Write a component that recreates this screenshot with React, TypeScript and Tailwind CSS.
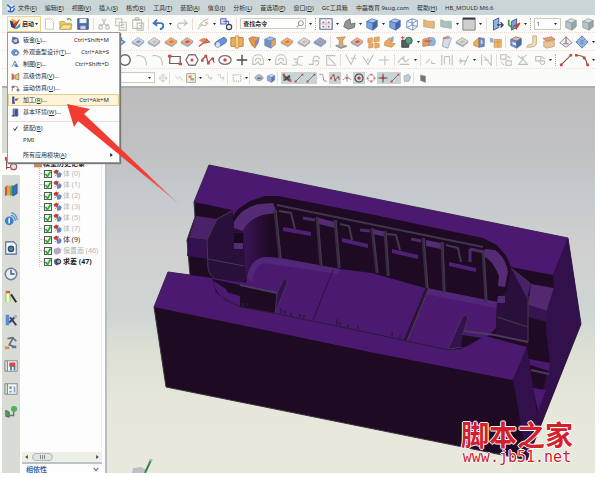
import { useState } from 'react'
import type { ReactNode } from 'react'
import clsx from 'clsx'

interface MenuItem {
  label: string
  shortcut?: string
  icon?: string
  checked?: boolean
  active?: boolean
  submenu?: boolean
}

interface TreeNode {
  label: string
  icon: string
  tone: string
}

const menus = [
  '文件(F)', '编辑(E)', '视图(V)', '插入(S)', '格式(R)', '工具(T)', '装配(A)', '信息(I)', '分析(L)',
  '首选项(P)', '窗口(O)', 'GC工具箱', '中磊教育 9sug.com', '帮助(H)', 'HB_MOULD M6.6',
]

const startMenu: MenuItem[][] = [
  [
    { label: '钣金(L)...', shortcut: 'Ctrl+Shift+M', icon: 'sheet' },
    { label: '外观造型设计(T)...', shortcut: 'Ctrl+Alt+S', icon: 'shape' },
    { label: '制图(F)...', shortcut: 'Ctrl+Shift+D', icon: 'drafting' },
    { label: '高级仿真(V)...', icon: 'simulation' },
    { label: '运动仿真(U)...', icon: 'motion' },
    { label: '加工(R)...', shortcut: 'Ctrl+Alt+M', icon: 'machining', active: true },
    { label: '基本环境(W)...', icon: 'gateway' },
  ],
  [
    { label: '装配(B)', checked: true },
    { label: 'PMI' },
  ],
  [{ label: '所有应用模块(A)', submenu: true }],
]

// '.' is a drop-down caret, '|' a divider, '#' a drag grip
const standardLeft = 'new open save | cut copy paste | undo . redo | wrench . props |'.split(' ')
const standardRight = 'table . shell . cube . cube wire patch patchGrey . window . | door csys . #'.split(' ')
const featureBar =
  'point slab slabGrey slabOrange slabRed sketch pipe block cone cubeOrange slabOrange slabGrey slabBlue | tee slabRed pattern corner unite . trim draft slabGrey thicken extract | shellBlue bend offset pyramid sphere .'.split(' ')
const sketchBar =
  'circle arc arc rect hexagon spline ellipse plus loop . loop offsetCurve hook corner2 | trimLine extend cross | mirror . | pointGrey fit axis . parallel | project group gearGrey . # line arcRed .'.split(' ')
const selectionBar = 'gear | snap boxSel . vertex vertex | marquee . | eye cubeSm |'.split(' ')
const snapBar = ['any', '+', 'line', '+', 'line', '+', 'curve', '', 'spline', '+', 'midpoint', '', 'target', '+', 'quadrant', '', 'plusRed', '+', 'line', '+', 'face', '']

const treeNodes: TreeNode[] = [
  ...[0, 1, 2, 3, 5, 7].map((n) => ({ label: `体 (${n})`, icon: 'body', tone: 'text-[#b5b5b5]' })),
  { label: '体 (9)', icon: 'body', tone: 'text-[#333]' },
  { label: '偏置面 (46)', icon: 'offsetFace', tone: 'text-[#b5b5b5]' },
  { label: '求差 (47)', icon: 'subtract', tone: 'font-bold text-[#222]' },
]

const resources = ['library', 'web', 'document', 'history', 'roles', 'tools', 'robot', 'wizard', 'template', 'flow']

const slab = (fill: string, accent: string, edge = '#8f9aa5') => (
  <>
    <path d="M1 8 8 3l7 4-6 5z" fill={fill} stroke={edge} strokeWidth=".8" />
    <path d="M1 8v2l8 4v-2zM9 12v2l6-5V7z" fill={edge} opacity=".7" />
    <path d="M5 8l4-2 3 1.500-4 2z" fill={accent} />
  </>
)

const box = (top: string, front: string, side: string, edge: string) => (
  <g stroke={edge} strokeWidth=".8" strokeLinejoin="round">
    <path d="M2 5l6-3 6 2-5 3z" fill={top} />
    <path d="M2 5v7l7 3V7z" fill={front} />
    <path d="M14 4v7l-5 4V7z" fill={side} />
  </g>
)

const grey = (d: string) => <path d={d} fill="none" stroke="#bfc0b3" strokeWidth="1.200" />

const glyphs: Record<string, ReactNode> = {
  new: <path d="M4 2h6l3 3v9H4z" fill="#fdfdfb" stroke="#c3c8b4" />,
  open: (
    <>
      <path d="M1 5h5l1 2h7v7H1z" fill="#e9c765" stroke="#b5964a" strokeWidth=".8" />
      <path d="M4 9h11l-3 5H1z" fill="#ffe596" stroke="#b5964a" strokeWidth=".8" />
      <path d="M9 3c3-2 4-1 5 1" fill="none" stroke="#5a9a45" strokeWidth="1.500" />
    </>
  ),
  save: (
    <>
      <path d="M2 2h12v12H2z" fill="#4e69a8" stroke="#3b4d7a" />
      <path d="M4 2h8v5H4z" fill="#eef2fa" />
      <path d="M5 10h6v4H5z" fill="#c7cfdf" />
    </>
  ),
  cut: grey('M6 2l4 8M10 2L6 10M2 9h5M10 9h4M4 10a2 2 0 1 0 .1 0M12 10a2 2 0 1 0 .1 0'),
  copy: grey('M2 2h7v8H2zM6 6h8v9H6zM8 9h4M8 12h4'),
  paste: grey('M2 3h10v10H2zM5 1h4v3H5zM7 7h7v8H7zM9 10h4'),
  undo: <path d="M6 3L2 7l4 3M2.500 7H10c4 0 4 6-1 7" fill="none" stroke="#4574bd" strokeWidth="2.200" />,
  redo: grey('M10 3l4 4-4 3M13.500 7H6c-4 0-4 6 1 7'),
  wrench: grey('M2 14l5-6M6 9l5 1 2-5M8 5l6-3M3 10l6-6M10 6l4 2'),
  props: (
    <>
      <path d="M2 2h6v6H2zM5 5h6v6" fill="#dfe7f7" stroke="#5868b8" strokeWidth="1.200" />
      <circle cx="11.500" cy="11.500" r="3" fill="#f2f2d8" stroke="#333b6d" strokeWidth="1.300" />
    </>
  ),
  table: (
    <>
      <path d="M1 2h14v12H1z" fill="#fff" stroke="#53699b" strokeWidth="1.300" />
      <path d="M4 5h2v2H4zM10 5h2v2h-2zM4 10h2v2H4zM10 10h2v2h-2z" fill="#d65348" />
      <path d="M8 2v12M1 8h14" stroke="#a9b9d8" />
    </>
  ),
  shell: <path d="M4 5l5-3 1 6 5-1-1 5-7 2-5-3z" fill="#8f9494" stroke="#686c6c" />,
  cube: box('#a9c8f3', '#7aa4e3', '#4467a9', '#4a68a4'),
  cubeGrey: box('#d6dddd', '#b8c3c5', '#98a4a6', '#8b9798'),
  cubeOrange: box('#9dbbe8', '#6e92d0', '#e8a35c', '#6b82ad'),
  wire: <path d="M2 5l6-3 6 2v7l-5 4-7-3zM2 5l7 2 5-3M9 7v8M8 2v7l-6 3M8 9l6 2" fill="none" stroke="#6d96bd" strokeWidth="1.100" />,
  patch: <path d="M2 3l5 2h7v8l-6-1-6-1z" fill="#e9b777" stroke="#c9a27a" />,
  patchGrey: <path d="M2 3l5 2h7v8l-6-1-6-1z" fill="#a9bfc6" stroke="#9bb39a" />,
  window: (
    <>
      <path d="M1 1h14v14H1z" fill="#cfd1cf" stroke="#777" />
      <path d="M1 1h14v2H1z" fill="#37304f" />
    </>
  ),
  door: (
    <>
      <path d="M4 4l6-3v11l-6 3z" fill="#8eb4e4" stroke="#3c5383" />
      <path d="M8 9h7M12 6l3 3-3 3" fill="none" stroke="#323d63" strokeWidth="1.400" />
    </>
  ),
  csys: (
    <>
      <path d="M5 5l6-3v10l-6 3z" fill="#789fd6" stroke="#3f568a" />
      <path d="M2 3v6l5 4" fill="none" stroke="#3d9b46" strokeWidth="2" />
      <path d="M7 11l8-4M10 14l4-6" stroke="#c63d36" strokeWidth="1.700" />
    </>
  ),
  point: <path d="M3 2l9 6-7 5M9 3l-4 9" fill="none" stroke="#4e91b6" strokeWidth="1.800" />,
  slab: slab('#cfdcec', '#7695c8'),
  slabGrey: slab('#d3dde3', '#ecb184'),
  slabOrange: slab('#f0b072', '#d97a36', '#b18c77'),
  slabRed: slab('#edb18c', '#cf4f3c', '#8994a5'),
  slabBlue: slab('#8dacdd', '#e58b62', '#6983b3'),
  sketch: (
    <>
      <path d="M2 6l6-3 5 3-5 4z" fill="#e58a65" />
      <path d="M2 13l10-7M10 4l4 4-5 1" fill="none" stroke="#bf6248" strokeWidth="1.500" />
    </>
  ),
  pipe: (
    <>
      <path d="M2 8l8-5c4-1 6 4 3 6l-8 5C1 14 0 10 2 8z" fill="#6e92d6" stroke="#4d6ba7" />
      <ellipse cx="4.500" cy="11" rx="2.500" ry="3" fill="#d3e0f4" />
    </>
  ),
  block: (
    <>
      <path d="M1 3h14v10H1z" fill="#eeb159" stroke="#aa7a40" />
      <path d="M6 1h4v14H6z" fill="#f6cd87" stroke="#bb8743" strokeWidth=".8" />
    </>
  ),
  cone: (
    <>
      <path d="M2 4l4-2 8 1-1 5-4 7-4-4z" fill="#e8944a" stroke="#af764c" strokeWidth=".8" />
      <path d="M9 7l5-3-1 5-4 5z" fill="#728fc4" />
    </>
  ),
  tee: (
    <>
      <path d="M3 3l10-1-3 4v5l5 2-7 2-6-3 4-1V6z" fill="#e6a866" stroke="#a98465" strokeWidth=".8" />
      <path d="M2 12l6 3 6-3" fill="none" stroke="#6b9bc4" strokeWidth="1.500" />
    </>
  ),
  pattern: <path d="M1 4l5-1v5l-5 1zM8 3l6-1v5l-6 1zM2 10l5-1v5l-5 1zM9 9l5 1v4l-5 1z" fill="#f0a95f" stroke="#c58a4c" strokeWidth=".7" />,
  corner: (
    <>
      <path d="M2 8l6-5 1 6 5 1-4 4-8-2z" fill="#eeaa58" stroke="#b9824c" strokeWidth=".8" />
      <path d="M9 3l3-2v6l-3 2z" fill="#88a6d6" />
    </>
  ),
  unite: (
    <>
      <path d="M2 6h8v8H2z" fill="#55605e" stroke="#333d3a" />
      <circle cx="10" cy="6.500" r="4" fill="#5f9a7e" stroke="#2f5c4e" />
      <path d="M3 1v4M1 3h4" stroke="#d55" strokeWidth="1.200" />
    </>
  ),
  trim: (
    <>
      <path d="M1 5l7-2v9l-7 1z" fill="#e89b5a" stroke="#b27f59" strokeWidth=".8" />
      <path d="M8 3h5c3 2 3 8 0 9H8z" fill="#92b3e2" stroke="#728fbd" strokeWidth=".8" />
      <path d="M3 7h8" stroke="#cf4c3f" strokeWidth="1.500" />
    </>
  ),
  draft: (
    <>
      <path d="M5 3l6-2 3 3-4 11-6-2z" fill="#d2dde9" stroke="#8d95a5" strokeWidth=".8" />
      <path d="M5 4l7-1" stroke="#d46a5e" strokeWidth="1.500" />
    </>
  ),
  thicken: (
    <>
      <path d="M2 8l6-5v11l-6-2z" fill="#f0b14c" stroke="#b28949" strokeWidth=".8" />
      <path d="M8 3l6 1v9l-6 1z" fill="#6c8fcb" stroke="#4c6ca9" strokeWidth=".8" />
      <path d="M10 6h2v4h-2z" fill="#f3d18d" />
    </>
  ),
  extract: (
    <>
      <path d="M1 3l4 1v5l-4-1z" fill="#8eb3d8" />
      <path d="M6 5h8v9H6z" fill="#efb66c" stroke="#c28f55" strokeWidth=".8" />
      <path d="M6 8h8M10 5v9" stroke="#d2925b" />
    </>
  ),
  shellBlue: (
    <>
      {box('#f1b98e', '#7394d1', '#4c68a2', '#596a97')}
      <path d="M4 8l4 1.500V12l-4-1.500z" fill="#e8eefa" />
    </>
  ),
  bend: <path d="M9 1h4v8c0 4-4 5-11 5l2-3c4 0 5-1 5-4z" fill="#e4dfc9" stroke="#d1a36f" />,
  offset: (
    <>
      <path d="M1 4l10-2 4 3-10 2z" fill="#ec9a74" stroke="#b6785a" strokeWidth=".8" />
      <path d="M2 7l3 1 9-2v7l-9 2-3-2z" fill="#e7c596" stroke="#b49a77" strokeWidth=".8" />
    </>
  ),
  pyramid: (
    <>
      <path d="M8 2l7 7-7 5-7-5z" fill="#e8eef4" stroke="#75839d" />
      <path d="M8 2v7M5 10h6" stroke="#c45d5d" strokeWidth="1.400" />
    </>
  ),
  sphere: (
    <>
      <path d="M8 1l7 7-7 7-7-7z" fill="#a9c5ee" stroke="#5b7cb2" />
      <path d="M1 8h14M8 1v14M4 5q4 3 8 0M4 11q4-3 8 0" fill="none" stroke="#5b7cb2" strokeWidth=".8" />
    </>
  ),
  circle: <circle cx="8" cy="8" r="6" fill="none" stroke="#666" strokeWidth="1.600" />,
  arc: grey('M2 3c7-1 11 3 11 11'),
  rect: (
    <>
      <path d="M2 4h12v8H2z" fill="none" stroke="#6c5f5f" strokeWidth="1.400" />
      <path d="M0 2h4v3H0zM12 11h4v3h-4z" fill="#cb4c43" />
    </>
  ),
  hexagon: (
    <>
      <path d="M4.500 2h7L15 8l-3.500 6h-7L1 8z" fill="none" stroke="#777" strokeWidth="1.500" />
      <circle cx="8" cy="8" r="1.800" fill="#d44" />
    </>
  ),
  spline: (
    <>
      <path d="M1 8l5-5 2 8 5-5 2 5" fill="none" stroke="#755" strokeWidth="1.400" />
      <path d="M4 2h3v3H4zM7 10h3v3H7zM12 5h3v3h-3zM0 7h3v3H0z" fill="#cf4b44" />
    </>
  ),
  ellipse: (
    <>
      <ellipse cx="8" cy="8" rx="7" ry="5" fill="none" stroke="#777" strokeWidth="1.500" />
      <circle cx="8" cy="8" r="2" fill="#d44" />
    </>
  ),
  plus: <path d="M8 2v12M2 8h12" stroke="#4c4c4c" strokeWidth="1.600" />,
  loop: grey('M2 13V8c0-8 12-8 12 0v5h-4l-2-3-3 3zM5 9c0-4 6-4 6 0'),
  offsetCurve: grey('M2 14h5c2 0 0-8 4-10h4M6 10l5 4h3M4 7h4'),
  hook: grey('M2 13h5V8c0-6 7-5 7-1M8 9h5c1 3 0 5-3 5'),
  corner2: grey('M3 2v12h11M3 3h10M5 5l8 8'),
  trimLine: grey('M2 2l6 11 5-11M8 6h6'),
  extend: grey('M2 4l6 9 6-11M8 6v3'),
  cross: grey('M2 8h12M9 3v11'),
  mirror: grey('M1 11l5-6 3 5 5-3M3 13h11M8 3v4'),
  pointGrey: grey('M3 12l5-5M10 9v3h4'),
  fit: grey('M2 2v12M14 2v12M5 4h6M5 4v9M11 4v9'),
  axis: grey('M2 9h9M8 14l5-11M3 6l3 3-3 3'),
  parallel: grey('M3 2v12M14 2v12L6 4M6 8h5'),
  project: grey('M2 2h6v5H2zM8 9h6v5H8zM2 10l4 4M9 3l4 3'),
  group: grey('M2 3l5 4 5-5M3 13h10l-5-6zM7 3v4'),
  gearGrey: grey('M3 4h6v5H3zM8 9h5c2 4-5 7-5 0M10 4l3 3'),
  line: (
    <>
      <path d="M3 13L13 3" stroke="#765" strokeWidth="1.400" />
      <path d="M1 12h3v3H1zM12 1h3v3h-3z" fill="#c9463f" />
    </>
  ),
  arcRed: (
    <>
      <path d="M2 3c7-1 11 3 12 11" fill="none" stroke="#765" strokeWidth="1.300" />
      <path d="M0 1h3v3H0zM9 4h3v3H9zM13 12h3v3h-3z" fill="#c9463f" />
    </>
  ),
  gear: grey('M8 3a5 5 0 1 0 .1 0M8 6a2 2 0 1 0 .1 0M8 1v3M8 12v3M1 8h3M12 8h3'),
  snap: grey('M2 5l4 4 3-3 5 6'),
  boxSel: (
    <>
      <path d="M1 1h14v14H1z" fill="#f6f1dd" stroke="#857c6c" />
      <path d="M4 4h5v4H4z" fill="#d88" />
      <path d="M7 8h6v4H7z" fill="#99b17f" />
    </>
  ),
  vertex: grey('M2 3h5v5h6M10 6l3 2-3 4'),
  marquee: <path d="M2 3h12v10H2z" fill="none" stroke="#8f8f86" strokeWidth="1.200" strokeDasharray="2 1.500" />,
  eye: (
    <>
      <path d="M1 8c4-7 10-7 14 0-4 6-10 6-14 0z" fill="#b9c2ca" stroke="#7b8791" />
      <path d="M5 7h7v3H5z" fill="#5b7a9d" />
    </>
  ),
  cubeSm: box('#c7daf4', '#88ace2', '#5877af', '#7688a8'),
  any: (
    <>
      <path d="M2 3l4 3 5-3 3 5-3 5-5-2-4 2z" fill="#6f8c6e" />
      <path d="M3 4l10 9M13 4L4 12" stroke="#3b3b3b" strokeWidth="1.800" />
      <path d="M1 1h4v4H1zM11 10h4v4h-4z" fill="#c94c42" />
    </>
  ),
  curve: <path d="M2 2h4c4 0 1 11 5 11h3" fill="none" stroke="#8a8383" strokeWidth="1.400" />,
  midpoint: (
    <>
      <path d="M8 2v12M2 11c2-5 10-5 12 0" fill="none" stroke="#777" strokeWidth="1.300" />
      <circle cx="8" cy="8" r="1.500" fill="#c55" />
    </>
  ),
  target: (
    <>
      <circle cx="8" cy="8" r="6.500" fill="none" stroke="#414141" strokeWidth="1.700" />
      <circle cx="8" cy="8" r="2.500" fill="#b9332c" />
    </>
  ),
  quadrant: (
    <>
      <circle cx="8" cy="8" r="5.500" fill="none" stroke="#b9a49a" strokeWidth="1.300" />
      <path d="M7 1h3v3H7zM7 12h3v3H7zM1 7h3v3H1zM12 7h3v3h-3z" fill="#d76d62" />
    </>
  ),
  plusRed: (
    <>
      <path d="M8 1v14M1 8h14" stroke="#4a4444" strokeWidth="1.600" />
      <path d="M6 6h4v4H6z" fill="#bf3c35" />
    </>
  ),
  face: <path d="M3 5l7-3 4 4-3 7-7 1z" fill="#bccbd8" stroke="#93a1ae" />,
  solid: <path d="M4 3l8 2v10l-8-3z" fill="#70757a" stroke="#a68b8b" />,
  // start menu
  logo: (
    <>
      <path d="M1 3l5 2 3 10L3 12z" fill="#2a3a80" />
      <path d="M3 1l7 3-3 6z" fill="#e5a12c" />
      <path d="M15 1L8 14l-2-6z" fill="#c93a28" />
      <path d="M9 13l6-6v5l-5 3z" fill="#3a97b5" />
    </>
  ),
  appLogo: (
    <>
      <path d="M2 6l6-4 6 4v6l-6 3-6-3z" fill="#e8f1fb" />
      <path d="M2 3l5 4v7M14 5L8 8M13 8c1 6-8 8-10 4" fill="none" stroke="#2f62b8" strokeWidth="2.200" />
    </>
  ),
  sheet: (
    <>
      <path d="M3 2l9 2 2 8-8 2-4-4z" fill="#5569a4" stroke="#37446f" />
      <path d="M4 7l7-2v5l-5 2z" fill="#c5d2ee" />
    </>
  ),
  shape: (
    <>
      <path d="M1 9c0-9 12-8 13 0l-3 4H4z" fill="#6f9ade" stroke="#3f64a8" />
      <circle cx="9" cy="9" r="3" fill="#dce8fa" stroke="#3f64a8" />
    </>
  ),
  drafting: (
    <>
      <path d="M2 12L7 2l4 8" fill="none" stroke="#4c7f78" strokeWidth="1.600" />
      <path d="M5 9l4-2 5 6-6-1z" fill="#4c78b8" />
    </>
  ),
  simulation: (
    <>
      <path d="M1 2l5 3v8l-5 1z" fill="#d66b3c" />
      <path d="M7 6l7-4v12l-7-2z" fill="#f0c85d" stroke="#4a5590" />
    </>
  ),
  motion: (
    <>
      <path d="M2 13c0-6 3-9 6-9s5 4 5 9" fill="none" stroke="#d18d45" strokeWidth="2" />
      <path d="M1 3h5v4H1zM10 9h5v4h-5z" fill="#677fae" />
    </>
  ),
  machining: (
    <>
      <path d="M2 1h4v9l-2 4-2-4z" fill="#3c52a8" />
      <path d="M7 5l7-1-4 5-3-1z" fill="#b6543e" />
      <path d="M2 10h5v4H2z" fill="#6e5a7c" />
    </>
  ),
  gateway: (
    <>
      <path d="M4 2h8v12H4z" fill="#e6ebf5" stroke="#28366e" strokeWidth="1.600" />
      <path d="M6 4l5-2v13l-5-2z" fill="#3b4f99" />
      <path d="M1 14h5" stroke="#222" strokeWidth="1.500" />
    </>
  ),
  // part navigator
  body: (
    <>
      <path d="M1 4l5-3 4 3-2 5-6-1z" fill="#c83e36" />
      <path d="M7 9l5-3 3 3-2 5-5 1z" fill="#6686c6" stroke="#445f99" strokeWidth=".8" />
      <path d="M5 6l6-4M6 10l-3 3" stroke="#555" />
    </>
  ),
  offsetFace: (
    <>
      <path d="M2 6l8-3 4 3-1 6-8 3-3-4z" fill="#9fb4da" stroke="#7d8fb5" />
      <path d="M5 7l6-1-1 5-5 1z" fill="#d99a93" />
    </>
  ),
  subtract: (
    <>
      <path d="M2 5l7-3 4 4v6l-7 3-4-4z" fill="#54606a" />
      <circle cx="10" cy="8" r="4" fill="#96a9a6" stroke="#222e3a" strokeWidth="1.500" />
    </>
  ),
  folder: <path d="M1 4h5l1 2h8v8H1z" fill="#d88b46" stroke="#9d5d30" />,
  // resource bar
  navigator: (
    <>
      <path d="M3 1v13M3 5h5M3 12h5" fill="none" stroke="#8a4a48" strokeWidth="1.300" />
      <path d="M1 0h4v4H1zM7 3h3v3H7z" fill="#d34b40" />
      <circle cx="11" cy="11" r="3.500" fill="#f5dede" stroke="#9a5c5c" strokeWidth="1.300" />
    </>
  ),
  library: (
    <>
      <path d="M1 5l3-3v11l-3 2z" fill="#d65134" />
      <path d="M4 4l3-2v11l-3 2z" fill="#dfa535" />
      <path d="M7 4l3-2v11l-3 2z" fill="#57a556" />
      <path d="M10 4l5-3v11l-5 3z" fill="#376fc0" stroke="#234a83" strokeWidth=".8" />
    </>
  ),
  web: (
    <>
      <circle cx="6" cy="10" r="5" fill="#3b80cf" />
      <path d="M6 7v6" stroke="#fff" strokeWidth="1.800" />
      <path d="M8 4c3 0 5 3 5 6M8 1c4 0 7 4 7 8" fill="none" stroke="#5692cf" strokeWidth="1.500" />
    </>
  ),
  document: (
    <>
      <path d="M2 1h9l3 3v11H2z" fill="#f6f8fc" stroke="#51648a" strokeWidth="1.200" />
      <circle cx="8" cy="9" r="3" fill="#3f9c60" stroke="#2d4a96" strokeWidth="1.500" />
    </>
  ),
  history: (
    <>
      <circle cx="8" cy="8" r="6.500" fill="#e6eef5" stroke="#74808c" strokeWidth="1.700" />
      <path d="M8 3v5h4" fill="none" stroke="#3a5a91" strokeWidth="1.600" />
    </>
  ),
  roles: (
    <>
      <path d="M2 1h5v3H2z" fill="#df5a3e" />
      <path d="M1 5h7v9H1z" fill="#a7df6c" />
      <path d="M3 4h3v10H3z" fill="#f4f6e2" />
      <path d="M8 5l6 9" stroke="#2c2c3a" strokeWidth="2.200" />
    </>
  ),
  tools: (
    <>
      <path d="M2 2h4v12H2z" fill="#5b8bd0" />
      <path d="M6 11l7-7M7 5l7 9" stroke="#32405c" strokeWidth="2.200" />
      <circle cx="13" cy="4" r="2" fill="#9eb4ce" />
    </>
  ),
  robot: (
    <>
      <path d="M4 3l6-1 4 4M10 3l-4 7 5 2" fill="none" stroke="#6b6f75" strokeWidth="2" />
      <path d="M1 12h5v3H1z" fill="#df8b43" />
      <path d="M9 11h5v3H9z" fill="#5679b4" />
    </>
  ),
  wizard: (
    <>
      <path d="M4 2H1v12h3" fill="none" stroke="#777f88" />
      <path d="M4 2h11v12H4z" fill="#f5f5f5" stroke="#777f88" />
      <path d="M6 4h7v5H6z" fill="#d84a3b" />
      <path d="M7 8h2v5H7zM11 8h2v5h-2z" fill="#4d79b8" />
    </>
  ),
  template: (
    <>
      <path d="M4 2H1v12h3" fill="none" stroke="#777f88" />
      <path d="M4 2h11v12H4z" fill="#f5f5f5" stroke="#777f88" />
      <path d="M6 5h3v3H6z" fill="#74b44f" />
      <path d="M6 10h3v2H6zM11 5h2v7h-2z" fill="#7aa7dc" />
    </>
  ),
  flow: (
    <>
      <path d="M2 6l4 2v6l-4-1z" fill="#4f9e5e" stroke="#415148" strokeWidth=".8" />
      <path d="M6 12h5V7" fill="none" stroke="#666e72" strokeWidth="1.500" />
      <circle cx="11.500" cy="4.500" r="3.500" fill="#4db35b" />
    </>
  ),
}

function Icon({ name, className = 'size-[14px]' }: { name: string; className?: string }) {
  return (
    <svg viewBox="0 0 16 16" className={clsx('shrink-0', className)} aria-hidden="true">
      {glyphs[name]}
    </svg>
  )
}

// Underlines the mnemonic letter in labels such as "文件(F)"
function Mnemonic({ text }: { text: string }) {
  const match = text.match(/^(.*\()([A-Z])(\).*)$/)
  if (!match) return <>{text}</>
  return (
    <>
      {match[1]}
      <u>{match[2]}</u>
      {match[3]}
    </>
  )
}

function Caret() {
  return (
    <svg viewBox="0 0 6 4" className="h-[2px] w-[3px] shrink-0" aria-hidden="true">
      <path d="M0 0h6L3 4z" fill="#222" />
    </svg>
  )
}

function Tools({ items, compact = false }: { items: string[]; compact?: boolean }) {
  return (
    <>
      {items.map((item, i) => {
        if (item === '|') return <span key={i} className={clsx('h-3 w-px shrink-0 bg-[#ecdcd6]', compact && 'mr-[3px]')} />
        if (item === '#') return <span key={i} className="h-3 w-px shrink-0 border-l border-dotted border-[#a8aca8]" />
        if (item === '.') {
          return (
            <button key={i} aria-label="More" className={clsx('flex h-3 shrink-0 items-center justify-center', compact ? 'w-[6px]' : 'w-[3px]')}>
              <Caret />
            </button>
          )
        }
        return (
          <button key={i} aria-label={item} className={clsx('flex shrink-0 items-center justify-center', compact ? 'w-3' : 'w-[14px]')}>
            <Icon name={item} className={compact ? 'size-[10px]' : 'size-[14px]'} />
          </button>
        )
      })}
    </>
  )
}

function StartMenu() {
  return (
    <div className="absolute top-[32px] left-[5px] z-10 w-[113px] border border-[#9a9d9d] bg-[#fdfdfd] py-px shadow-[1px_1px_1px_#777]">
      {startMenu.map((group, g) => (
        <div key={g} className={clsx(g > 0 && 'mt-[3px]', g === 1 && 'border-t border-[#e6dcd9]')}>
          {group.map((item) => (
            <button
              key={item.label}
              className={clsx(
                'flex h-3 w-full items-center border pr-[9px] pl-[2px] text-left',
                item.active ? 'border-[#e6cf95] bg-[#fdf3d8]' : 'border-transparent',
              )}
            >
              <span className="flex w-3 shrink-0">
                {item.icon && <Icon name={item.icon} className="size-[9px]" />}
                {item.checked && (
                  <svg viewBox="0 0 8 8" className="ml-[2px] size-[5px]" aria-hidden="true">
                    <path d="M1 4l2 3 4-6" fill="none" stroke="#222" strokeWidth="1.500" />
                  </svg>
                )}
              </span>
              <span><Mnemonic text={item.label} /></span>
              {item.shortcut && <span className="ml-auto">{item.shortcut}</span>}
              {item.submenu && (
                <svg viewBox="0 0 4 6" className="-mr-1 ml-auto h-1 w-[3px]" aria-hidden="true">
                  <path d="M0 0l4 3-4 3z" fill="#222" />
                </svg>
              )}
            </button>
          ))}
        </div>
      ))}
    </div>
  )
}

function Toolbars({ onStart }: { onStart: () => void }) {
  return (
    <div className="border-b-2 border-[#a9adad] bg-[#fbfbfa]">
      <div className="flex h-[18px] items-center border-b border-dotted border-[#f0dcd4] pl-[5px]">
        <button onClick={onStart} className="flex h-4 w-[34px] shrink-0 items-center gap-px border border-[#ecd294] bg-[#fff8e8] px-px">
          <Icon name="logo" className="size-[12px]" />
          <span className="font-bold">启动</span>
          <Caret />
        </button>
        <div className="flex flex-1 items-center justify-between pl-px">
          <Tools items={standardLeft} />
          <div className="flex h-[11px] w-[66px] items-center border border-[#c9cbbd] bg-white pr-px pl-[2px]">
            <input aria-label="查找命令" defaultValue="查找命令" className="w-full min-w-0 font-bold outline-none" />
            <svg viewBox="0 0 10 10" className="size-2 shrink-0" aria-hidden="true">
              <path d="M6 1a3 3 0 1 0 .1 0M4 6L1 9" fill="none" stroke="#9a9a92" strokeWidth="1.300" />
            </svg>
          </div>
          <Tools items={['.', '#', ...standardRight]} />
          <span className="relative flex shrink-0 items-center">
            <select aria-label="Layer" className="h-[12px] w-[27px] appearance-none border border-[#c9cbbd] bg-white pl-[2px]">
              <option>1</option>
            </select>
            <span className="pointer-events-none absolute right-1">
              <Caret />
            </span>
          </span>
          <Tools items={['cubeGrey', 'cubeGrey']} />
        </div>
      </div>
      <div className="flex h-[18px] items-center justify-between border-b border-dotted border-[#f0dcd4] pl-[112px]">
        <Tools items={featureBar} />
      </div>
      <div className="flex h-[18px] items-center justify-between border-b border-dotted border-[#f0dcd4] pl-[116px]">
        <Tools items={sketchBar} />
      </div>
      <div className="flex h-[17px] items-center pl-[93px]">
        <select aria-label="Selection scope" className="mr-[2px] h-[11px] w-[60px] appearance-none border border-[#c9cbbd] bg-white">
          <option></option>
        </select>
        <span className="-ml-[9px] mr-[6px] flex">
          <Caret />
        </span>
        <Tools items={selectionBar} compact />
        {snapBar.map((name, i) =>
          i % 2 ? null : (
            <button
              key={i}
              aria-label={name}
              aria-pressed={snapBar[i + 1] === '+'}
              className={clsx('flex h-3 w-3 items-center justify-center', snapBar[i + 1] && 'bg-[#c8d4d6]')}
            >
              <Icon name={name} className="size-[10px]" />
            </button>
          ),
        )}
        <Tools items={['|', 'solid']} compact />
      </div>
    </div>
  )
}

function ResourceBar() {
  return (
    <aside className="flex w-[18px] shrink-0 flex-col items-center bg-[#d8dcd5] pt-[65px]">
      <button aria-label="navigator" className="flex h-[22px] w-full items-center justify-center bg-[#fbfbfa]">
        <Icon name="navigator" />
      </button>
      <div className="flex w-full flex-col">
        {resources.map((name, i) => (
          <button key={name} aria-label={name} className={clsx('flex items-center justify-center', i < 3 ? 'h-[29px]' : 'h-[23px]')}>
            <Icon name={name} />
          </button>
        ))}
      </div>
    </aside>
  )
}

function PartNavigator() {
  return (
    <section className="flex w-[87px] shrink-0 flex-col border-r-2 border-[#b9bec2] bg-[#fdfdfd] text-[7px]">
      <div className="mr-[3px] ml-[2px] flex-1 border-r border-dotted border-[#ecd8d6] pt-[72px]">
        <div className="flex h-2 items-center gap-px pl-3 font-bold">
          <Icon name="folder" className="size-2" />
          <span>模型历史记录</span>
        </div>
        <ul className="ml-[17px] border-l border-dotted border-[#dcbcb8]">
          {treeNodes.map((node) => (
            <li key={node.label} className="flex h-[11px] items-center">
              <span className="w-1 border-t border-dotted border-[#dcbcb8]" />
              <label className={clsx('flex items-center whitespace-nowrap', node.tone)}>
                <span className="relative flex">
                  <input type="checkbox" defaultChecked className="peer size-2 appearance-none border border-[#555] bg-[#e9f8e2]" />
                  <svg viewBox="0 0 8 8" className="pointer-events-none absolute inset-0 hidden size-2 peer-checked:block" aria-hidden="true">
                    <path d="M1.500 4l2 2.500 3-5" fill="none" stroke="#2dab3a" strokeWidth="1.700" />
                  </svg>
                </span>
                <Icon name={node.icon} className="mr-px ml-px size-[9px]" />
                {node.label}
              </label>
            </li>
          ))}
        </ul>
      </div>
      <div className="mr-[3px] ml-[2px] flex h-[10px] items-center justify-between bg-[#eef0e8] px-[3px]">
        <svg viewBox="0 0 4 6" className="h-1 w-[3px]" aria-hidden="true"><path d="M4 0L0 3l4 3z" fill="#444" /></svg>
        <div className="mr-auto ml-1 flex h-2 w-[21px] items-center justify-center gap-px rounded-sm border border-[#b5b5b5] bg-[#e2e3e3]">
          <span className="h-1 w-px bg-[#888]" />
          <span className="h-1 w-px bg-[#888]" />
          <span className="h-1 w-px bg-[#888]" />
        </div>
        <svg viewBox="0 0 4 6" className="h-1 w-[3px]" aria-hidden="true"><path d="M0 0l4 3-4 3z" fill="#444" /></svg>
      </div>
      <button className="mr-[3px] ml-[2px] flex h-[11px] items-end justify-between overflow-hidden border-t-2 border-[#bcc2c6] pr-[3px] pl-1 text-[#3c68ae]">
        <span className="h-2 leading-[10px] font-bold">相依性</span>
        <svg viewBox="0 0 8 8" className="size-[6px]" aria-hidden="true">
          <path d="M1 1l3 4 3-4" fill="none" stroke="#4a6a99" strokeWidth="1.500" />
        </svg>
      </button>
    </section>
  )
}

const ribs = [
  [275, 210, 280, 258], [317, 217, 321, 267], [335, 220, 339, 268], [372, 228, 377, 273],
  [385, 231, 388, 276], [423, 238, 427, 288], [442, 242, 444, 293], [483, 250, 486, 302],
]

function Viewport() {
  return (
    <main className="relative min-w-0 flex-1">
      <svg viewBox="107 88 488 385" className="block h-auto w-full" role="img" aria-label="Mould cavity">
        <defs>
          <linearGradient id="backdrop" x1="0" y1="0" x2="0" y2="1">
            <stop offset="0" stopColor="#bcbcbd" />
            <stop offset=".18" stopColor="#c1c2c4" />
            <stop offset=".28" stopColor="#c4cacd" />
            <stop offset=".42" stopColor="#d0d0d0" />
            <stop offset=".58" stopColor="#ced5d3" />
            <stop offset=".68" stopColor="#dcdfd4" />
            <stop offset=".82" stopColor="#e6e7da" />
            <stop offset="1" stopColor="#e9e8dc" />
          </linearGradient>
          <linearGradient id="bend" x1="0" y1="0" x2="1" y2="0">
            <stop offset="0" stopColor="#3b1457" />
            <stop offset=".7" stopColor="#1f0a24" />
          </linearGradient>
        </defs>
        <path d="M107 88h488v385H107z" fill="url(#backdrop)" />

        {/* silhouette */}
        <path d="M209 165L568 238 581 324 527 460 166 387 154 307 168 272 190 275 187 240 195 217 194 202z" fill="#1f0a24" stroke="#3a3340" strokeWidth="1" />
        <path d="M194 202L209 165 568 238 553 275 511 267 507 257 497 245 483 238 370 214 278 196 265 196 250 201 238 209 233 216 232 210z" fill="#4b1a70" />

        {/* left shoulder */}
        <path d="M196 216L217 219 207 240 189 238z" fill="#4a2268" />
        <path d="M189 238L207 240 208 259 187 256z" fill="#34124f" />
        <path d="M232 210L217 219 207 240 208 268 213 277 245 284 246 265 243 229 234 225z" fill="#29103b" />
        <path d="M208 259L244 266M232 211L217 219 207 240 208 268Q210 277 216 279L278 292" fill="none" stroke="#433b50" strokeWidth="1" />
        <path d="M234 222Q242 207 260 204L273 203 277 213 263 215Q249 219 243 231L234 228z" fill="#552b76" />
        <path d="M234 233h9v10h-9z" fill="#190720" />
        <path d="M234 243h9v6h-9z" fill="#552b76" />
        <path d="M243 231Q249 219 263 215L277 213 280 258 263 256 252 265 246 281z" fill="url(#bend)" />

        {/* cavity floor */}
        <path d="M246 283Q250 258 266 257L280 258 340 269 372 273 425 288 497 302 496 328 487 337 465 347 448 350 370 333 273 313 240 307 212 278z" fill="#4b1a70" />
        <path d="M247 278Q250 258 266 257L280 258 340 269 338 274 264 263Q254 266 252 282z" fill="#522679" />
        <path d="M427 288L497 302 496 308 425 294z" fill="#522679" />
        <path d="M333 270L313 320" stroke="#2a1438" strokeWidth="1" />
        <path d="M427 288L405 341" stroke="#2a1438" strokeWidth="3" />
        <path d="M429 288L407 341" stroke="#4a3d58" strokeWidth="1" />

        {/* ribbed back wall */}
        <path d="M277 205L370 224 483 247" fill="none" stroke="#41344d" strokeWidth="2" />
        <path d="M319 218l16 4v6l-16-4zM373 229l13 3v5l-13-3zM426 240l15 3v6l-15-3zM485 249l8 2v7l-8-3z" fill="#552b76" />
        {ribs.map(([x1, y1, x2, y2]) => (
          <g key={x1}>
            <path d={`M${x1} ${y1}L${x2} ${y2}`} stroke="#362a40" strokeWidth="3" />
            <path d={`M${x1 + 1} ${y1}L${x2 + 1} ${y2}`} stroke="#453a50" strokeWidth="1" />
          </g>
        ))}
        <path d="M283 227l28 5v4l-28-5zM342 238l26 6v4l-26-6zM392 249l26 6v4l-26-6zM449 262l27 6v4l-27-6z" fill="#4f2075" />
        <path d="M279 211l12 2 4 16M340 224l9 2 3 14M387 234l9 1 4 15M446 245l12 3 3 14" fill="none" stroke="#453750" strokeWidth="2" />
        <path d="M303 218l12 2M360 230l10 1M411 239l10 2M470 249v13M470 249l14 3" fill="none" stroke="#4d2a69" strokeWidth="3" />

        {/* right shoulder */}
        <path d="M485 249L495 250Q506 258 508 272L505 287 498 286 499 276Q493 261 485 257z" fill="#552b76" />
        <path d="M511 268L528 296 528 342 496 334 497 302 507 290z" fill="#29103b" />
        <path d="M511 268L531 284 527 298z" fill="#492167" />
        <path d="M498 296h7v7h-8z" fill="#552b76" />
        <path d="M531 284L554 288 547 311 528 305z" fill="#52286f" />
        <path d="M528 305L547 311 547 322 528 317z" fill="#37134f" />
        <path d="M511 268L531 284M528 296V342M497 317L528 327" fill="none" stroke="#433b50" strokeWidth="1" />
        <path d="M568 238L581 324 527 460 537 413 550 363 546 330 547 310 554 288 553 275z" fill="#32104b" />

        {/* pockets */}
        <path d="M213 279L240 285 277 293 275 313 240 307 240 296 226 292z" fill="#1f0a24" />
        <path d="M213 281Q216 299 240 307L240 301Q228 297 226 289z" fill="#4b1a70" />
        <path d="M277 293L283 280Q285 276 288 281L275 313z" fill="#34124f" stroke="#433b50" strokeWidth=".8" />
        <path d="M240 285L277 293" stroke="#4d3a5e" strokeWidth="2" />
        <path d="M448 349L462 318Q465 312 468 318L462 336 462 347z" fill="#34124f" stroke="#433b50" strokeWidth=".8" />
        <path d="M462 335L482 338 465 347 461 347z" fill="#1f0a24" />
        <path d="M464 331L495 335 528 342" fill="none" stroke="#4d3a5e" strokeWidth="2" />

        {/* front wall */}
        <path d="M168 272L212 278 216 292 226 301 240 307 273 313 370 333 448 350 460 349 470 345 485 336 527 347 513 380 370 352 154 307z" fill="#4b1a70" />
        <path d="M223 297L240 307 273 313 370 333 448 350 460 349" fill="none" stroke="#2d1a39" strokeWidth="1" />
        <path d="M243 307v-4M247 306v-3M281 313v-5M285 314v-4M291 316v-3M300 317v-3M304 318v-3M337 325v-6M340 325v-3M348 328v-4M358 329v-4M392 336v-4M400 338v-3" stroke="#2d1a39" strokeWidth="1.500" />
        <path d="M527 347L513 380 527 460 537 413z" fill="#32104b" />
        <path d="M529 359L550 363 549 371 530 365z" fill="#4b1a70" />
        <path d="M531 370L549 374" stroke="#4d3a5e" strokeWidth="2" />
        <path d="M533 388L546 390 538 411z" fill="#4b1a70" />

        {/* view triad */}
        <path d="M133 468l8-1 6 3-3 3h-12z" fill="#bcc2c4" />
        <path d="M145 473l6-13" stroke="#358a42" strokeWidth="2" />
        <path d="M149 459h4l-2 3z" fill="#aeb9bf" />
      </svg>

      <div className="absolute right-[22px] bottom-2 flex flex-col items-center font-['Noto_Sans_CJK_SC',sans-serif] text-[#d3202b] [text-shadow:1px_0_#fff,-1px_0_#fff,0_1px_#fff,0_-1px_#fff]">
        <span className="text-[28px] leading-[30px] font-bold">脚本之家</span>
        <span className="font-['DejaVu_Sans_Mono',monospace] text-[15px] leading-[16px]">www.jb51.net</span>
      </div>
    </main>
  )
}

export default function App() {
  const [menuOpen, setMenuOpen] = useState(true)

  return (
    <div className="bg-white pr-[5px] pb-1 pl-[2px] font-['Noto_Sans','Noto_Sans_CJK_SC',sans-serif] text-[6px] leading-[8px] text-[#2d2d2d]">
      <div className="relative">
        <nav className="flex h-[15px] items-center gap-2 overflow-hidden bg-[#c9d5d7] pl-1 whitespace-nowrap">
          <Icon name="appLogo" className="-mr-[6px] size-[10px]" />
          {menus.map((menu) => (
            <button key={menu}>
              <Mnemonic text={menu} />
            </button>
          ))}
        </nav>
        <Toolbars onStart={() => setMenuOpen(!menuOpen)} />
        <div className="flex">
          <ResourceBar />
          <PartNavigator />
          <Viewport />
        </div>
        {menuOpen && <StartMenu />}
        <svg viewBox="0 0 116 104" className="pointer-events-none absolute top-[103px] left-[64px] z-20 h-[104px] w-[116px]" aria-hidden="true">
          <defs>
            <linearGradient id="arrow" x1="0" y1="0" x2="1" y2="1">
              <stop offset=".7" stopColor="#f23c33" />
              <stop offset="1" stopColor="#e0a09a" />
            </linearGradient>
          </defs>
          <path d="M1 1L24 6 18 11 55 46 114 102 50 49 12 18 8 24z" fill="url(#arrow)" />
        </svg>
      </div>
    </div>
  )
}
